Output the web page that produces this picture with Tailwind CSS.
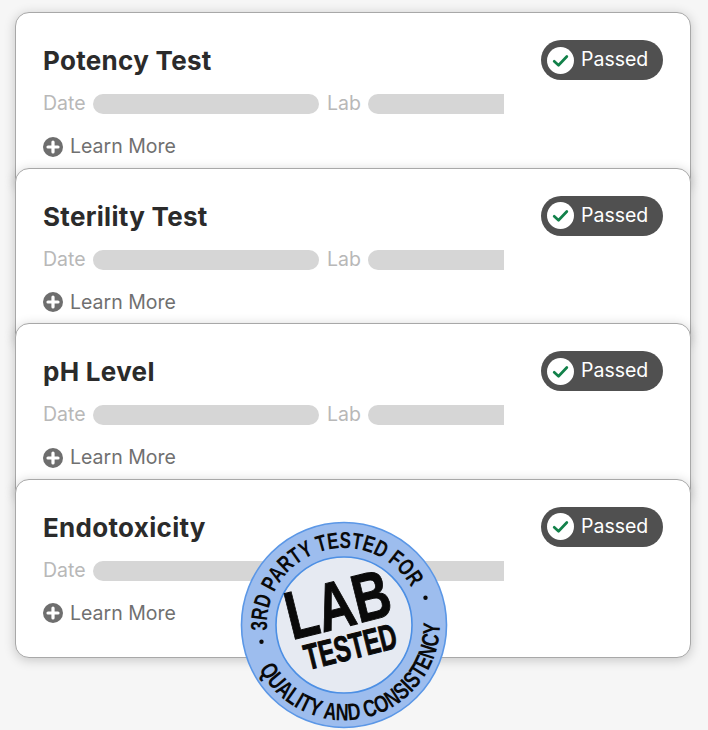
<!DOCTYPE html>
<html lang="en">
<head>
  <meta charset="UTF-8" />
  <title>Lab Tested</title>
  <script src="https://cdn.jsdelivr.net/npm/@tailwindcss/browser@4"></script>
</head>
<body class="bg-[#f6f6f6] font-['Inter',sans-serif]">
<div class="relative w-[708px] h-[730px] overflow-hidden pt-[12px] pl-[15px]">

  <!-- Potency Test -->
  <section class="relative w-[676px] h-[179px] -mb-[23.5px] bg-white rounded-[14px] border border-[#a8a8a8] shadow-[0_2px_12px_rgba(0,0,0,0.2)] px-[27px] pt-[27px]">
    <div class="flex justify-between items-center h-[40px]">
      <h2 class="text-[26px] font-bold tracking-[0.3px] pt-[1px] text-[#2b2b2b]">Potency Test</h2>
      <div class="flex items-center w-[122px] h-[40px] rounded-full bg-[#505050] pl-[6px] gap-[7px]">
        <span class="flex items-center justify-center w-[27px] h-[27px] rounded-full bg-white">
          <svg viewBox="0 0 24 24" class="w-[19px] h-[19px]" fill="none" stroke="#12814a" stroke-width="3.4" stroke-linecap="round" stroke-linejoin="round"><path d="M4 13l5.5 5L20 7"/></svg>
        </span>
        <span class="text-[19.5px] text-white">Passed</span>
      </div>
    </div>
    <div class="flex items-center h-[20px] mt-[14px] text-[19.5px] text-[#b8b8b8]">
      <span class="w-[50px]">Date</span>
      <span class="w-[226px] h-[20px] rounded-full bg-[#d6d6d6]"></span>
      <span class="w-[41px] ml-[8px]">Lab</span>
      <span class="w-[136px] h-[20px] rounded-l-full bg-[#d6d6d6]"></span>
    </div>
    <div class="flex items-center gap-[7px] mt-[18px] text-[19.5px] text-[#707070]">
      <svg viewBox="0 0 20 20" class="w-[20px] h-[20px]"><circle cx="10" cy="10" r="10" fill="#6e6e6e"/><path d="M10 5v10M5 10h10" stroke="#fff" stroke-width="3.2" stroke-linecap="round"/></svg>
      <span>Learn More</span>
    </div>
  </section>

  <!-- Sterility Test -->
  <section class="relative w-[676px] h-[179px] -mb-[23.5px] bg-white rounded-[14px] border border-[#a8a8a8] shadow-[0_2px_12px_rgba(0,0,0,0.2)] px-[27px] pt-[27px]">
    <div class="flex justify-between items-center h-[40px]">
      <h2 class="text-[26px] font-bold tracking-[0.3px] pt-[1px] text-[#2b2b2b]">Sterility Test</h2>
      <div class="flex items-center w-[122px] h-[40px] rounded-full bg-[#505050] pl-[6px] gap-[7px]">
        <span class="flex items-center justify-center w-[27px] h-[27px] rounded-full bg-white">
          <svg viewBox="0 0 24 24" class="w-[19px] h-[19px]" fill="none" stroke="#12814a" stroke-width="3.4" stroke-linecap="round" stroke-linejoin="round"><path d="M4 13l5.5 5L20 7"/></svg>
        </span>
        <span class="text-[19.5px] text-white">Passed</span>
      </div>
    </div>
    <div class="flex items-center h-[20px] mt-[14px] text-[19.5px] text-[#b8b8b8]">
      <span class="w-[50px]">Date</span>
      <span class="w-[226px] h-[20px] rounded-full bg-[#d6d6d6]"></span>
      <span class="w-[41px] ml-[8px]">Lab</span>
      <span class="w-[136px] h-[20px] rounded-l-full bg-[#d6d6d6]"></span>
    </div>
    <div class="flex items-center gap-[7px] mt-[18px] text-[19.5px] text-[#707070]">
      <svg viewBox="0 0 20 20" class="w-[20px] h-[20px]"><circle cx="10" cy="10" r="10" fill="#6e6e6e"/><path d="M10 5v10M5 10h10" stroke="#fff" stroke-width="3.2" stroke-linecap="round"/></svg>
      <span>Learn More</span>
    </div>
  </section>

  <!-- pH Level -->
  <section class="relative w-[676px] h-[179px] -mb-[23.5px] bg-white rounded-[14px] border border-[#a8a8a8] shadow-[0_2px_12px_rgba(0,0,0,0.2)] px-[27px] pt-[27px]">
    <div class="flex justify-between items-center h-[40px]">
      <h2 class="text-[26px] font-bold tracking-[0.3px] pt-[1px] text-[#2b2b2b]">pH Level</h2>
      <div class="flex items-center w-[122px] h-[40px] rounded-full bg-[#505050] pl-[6px] gap-[7px]">
        <span class="flex items-center justify-center w-[27px] h-[27px] rounded-full bg-white">
          <svg viewBox="0 0 24 24" class="w-[19px] h-[19px]" fill="none" stroke="#12814a" stroke-width="3.4" stroke-linecap="round" stroke-linejoin="round"><path d="M4 13l5.5 5L20 7"/></svg>
        </span>
        <span class="text-[19.5px] text-white">Passed</span>
      </div>
    </div>
    <div class="flex items-center h-[20px] mt-[14px] text-[19.5px] text-[#b8b8b8]">
      <span class="w-[50px]">Date</span>
      <span class="w-[226px] h-[20px] rounded-full bg-[#d6d6d6]"></span>
      <span class="w-[41px] ml-[8px]">Lab</span>
      <span class="w-[136px] h-[20px] rounded-l-full bg-[#d6d6d6]"></span>
    </div>
    <div class="flex items-center gap-[7px] mt-[18px] text-[19.5px] text-[#707070]">
      <svg viewBox="0 0 20 20" class="w-[20px] h-[20px]"><circle cx="10" cy="10" r="10" fill="#6e6e6e"/><path d="M10 5v10M5 10h10" stroke="#fff" stroke-width="3.2" stroke-linecap="round"/></svg>
      <span>Learn More</span>
    </div>
  </section>

  <!-- Endotoxicity -->
  <section class="relative w-[676px] h-[179px] bg-white rounded-[14px] border border-[#a8a8a8] shadow-[0_2px_12px_rgba(0,0,0,0.2)] px-[27px] pt-[27px]">
    <div class="flex justify-between items-center h-[40px]">
      <h2 class="text-[26px] font-bold tracking-[0.3px] pt-[1px] text-[#2b2b2b]">Endotoxicity</h2>
      <div class="flex items-center w-[122px] h-[40px] rounded-full bg-[#505050] pl-[6px] gap-[7px]">
        <span class="flex items-center justify-center w-[27px] h-[27px] rounded-full bg-white">
          <svg viewBox="0 0 24 24" class="w-[19px] h-[19px]" fill="none" stroke="#12814a" stroke-width="3.4" stroke-linecap="round" stroke-linejoin="round"><path d="M4 13l5.5 5L20 7"/></svg>
        </span>
        <span class="text-[19.5px] text-white">Passed</span>
      </div>
    </div>
    <div class="flex items-center h-[20px] mt-[14px] text-[19.5px] text-[#b8b8b8]">
      <span class="w-[50px]">Date</span>
      <span class="w-[226px] h-[20px] rounded-full bg-[#d6d6d6]"></span>
      <span class="w-[41px] ml-[8px]">Lab</span>
      <span class="w-[136px] h-[20px] rounded-l-full bg-[#d6d6d6]"></span>
    </div>
    <div class="flex items-center gap-[7px] mt-[18px] text-[19.5px] text-[#707070]">
      <svg viewBox="0 0 20 20" class="w-[20px] h-[20px]"><circle cx="10" cy="10" r="10" fill="#6e6e6e"/><path d="M10 5v10M5 10h10" stroke="#fff" stroke-width="3.2" stroke-linecap="round"/></svg>
      <span>Learn More</span>
    </div>
  </section>

  <!-- Lab tested seal -->
  <svg viewBox="0 0 210 210" class="absolute left-[238.5px] top-[520px] w-[210px] h-[210px]">
    <defs>
      <path id="arcTop" d="M 28.2 110.4 A 77 77 0 0 1 173 68.9"/>
      <path id="arcBottom" d="M 20 149.1 A 96 96 0 0 0 200.9 101.7"/>
    </defs>
    <circle cx="105" cy="105" r="102.5" fill="#9dbdee" stroke="#5b97e6" stroke-width="1.6"/>
    <circle cx="105" cy="105" r="68" fill="#e6eaf2" stroke="#4c8fe4" stroke-width="1.6"/>
    <g font-family="'Liberation Sans',sans-serif" font-weight="700" fill="#0a0a0a">
      <text font-size="23"><textPath href="#arcTop" textLength="208" lengthAdjust="spacingAndGlyphs">3RD PARTY TESTED FOR</textPath></text>
      <text font-size="24"><textPath href="#arcBottom" textLength="256" lengthAdjust="spacingAndGlyphs">QUALITY AND CONSISTENCY</textPath></text>
      <circle cx="22.5" cy="121.7" r="2.2"/>
      <circle cx="186.5" cy="77.7" r="2.2"/>
      <g transform="rotate(-14 105 105)" stroke="#0a0a0a" stroke-width="1">
        <text x="104" y="107" text-anchor="middle" font-size="68" textLength="106" lengthAdjust="spacingAndGlyphs">LAB</text>
        <text x="106" y="140" text-anchor="middle" font-size="36" textLength="94" lengthAdjust="spacingAndGlyphs">TESTED</text>
      </g>
    </g>
  </svg>
</div>
</body>
</html>
